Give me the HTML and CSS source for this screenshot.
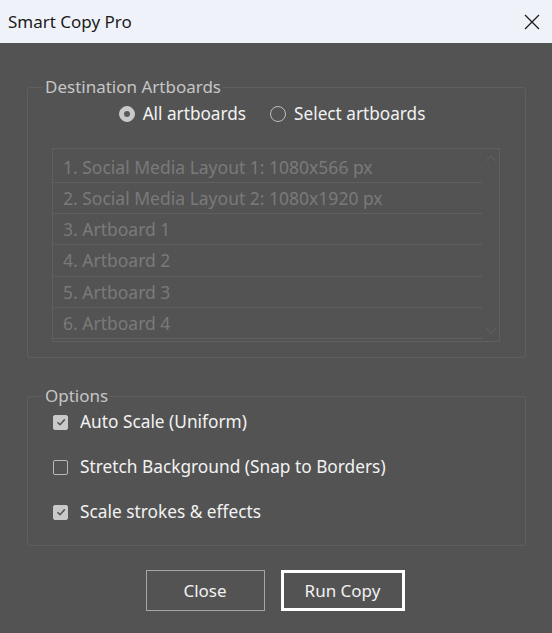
FILE: index.html
```html
<!DOCTYPE html>
<html lang="en">
<head>
    <meta charset="UTF-8">
    <meta name="viewport" content="width=device-width, initial-scale=1.0">
    <title>Smart Copy Pro</title>
    <link rel="stylesheet" href="styles.css">
</head>
<body>
    <div class="titlebar">
        <span class="title">Smart Copy Pro</span>
        <span class="close-x">
            <svg width="16" height="16" viewBox="0 0 16 16">
                <path d="M1 1L15 15M15 1L1 15" stroke="#1b1b1b" stroke-width="1.3" fill="none"/>
            </svg>
        </span>
    </div>

    <div class="dialog">
        <fieldset class="panel">
            <legend>Destination Artboards</legend>
            <div class="radio-row">
                <label class="radio checked"><span class="dot"></span>All artboards</label>
                <label class="radio"><span class="dot"></span>Select artboards</label>
            </div>
            <div class="listbox">
                <ul class="items">
                    <li>1. Social Media Layout 1: 1080x566 px</li>
                    <li>2. Social Media Layout 2: 1080x1920 px</li>
                    <li>3. Artboard 1</li>
                    <li>4. Artboard 2</li>
                    <li>5. Artboard 3</li>
                    <li>6. Artboard 4</li>
                </ul>
                <div class="scroll">
                    <svg width="12" height="8" viewBox="0 0 12 8"><path d="M1 6L6 1L11 6" stroke="#626262" fill="none"/></svg>
                    <svg width="12" height="8" viewBox="0 0 12 8"><path d="M1 2L6 7L11 2" stroke="#626262" fill="none"/></svg>
                </div>
            </div>
        </fieldset>

        <fieldset class="panel options">
            <legend>Options</legend>
            <label class="check checked"><span class="box"><svg width="12" height="12" viewBox="0 0 12 12"><path d="M2.5 6.2L5 8.7L9.8 3.4" stroke="#555" stroke-width="1.6" fill="none"/></svg></span>Auto Scale (Uniform)</label>
            <label class="check"><span class="box"></span>Stretch Background (Snap to Borders)</label>
            <label class="check checked"><span class="box"><svg width="12" height="12" viewBox="0 0 12 12"><path d="M2.5 6.2L5 8.7L9.8 3.4" stroke="#555" stroke-width="1.6" fill="none"/></svg></span>Scale strokes &amp; effects</label>
        </fieldset>

        <div class="buttons">
            <button class="btn">Close</button>
            <button class="btn primary">Run Copy</button>
        </div>
    </div>
</body>
</html>
```

FILE: styles.css
```css
body {
    margin: 0;
    width: 552px;
    height: 633px;
    background: #535353;
    font-family: "Noto Sans", "Open Sans", sans-serif;
    font-size: 17px;
    overflow: hidden;
}
.titlebar {
    height: 43px;
    background: #eff3f9;
    display: flex;
    align-items: center;
    justify-content: space-between;
    padding: 0 12px 0 8px;
}
.title {
    color: #1b1b1b;
    font-size: 17px;
}
.close-x {
    display: flex;
    margin-top: 1px;
}
.dialog {
    padding: 33px 26px 0 27px;
}
.panel {
    margin: 0;
    padding: 0 25px 0 24px;
    border: 1px solid #5f5f5f;
    border-radius: 3px;
}
.panel legend {
    color: #c6c6c6;
    padding: 0 2px;
    margin-left: -9px;
    line-height: 22px;
}
.radio-row {
    display: flex;
    justify-content: center;
    gap: 24px;
    margin-top: 4px;
    margin-left: -8px;
    font-size: 17.2px;
}
.radio {
    display: flex;
    align-items: center;
    gap: 8px;
    color: #f2f2f2;
    line-height: 24px;
}
.dot {
    width: 14px;
    height: 14px;
    border: 1px solid #bdbdbd;
    border-radius: 50%;
    box-sizing: content-box;
}
.radio.checked .dot {
    background: #c9c9c9;
    border-color: #c9c9c9;
    position: relative;
}
.radio.checked .dot::after {
    content: "";
    position: absolute;
    left: 4px;
    top: 4px;
    width: 6px;
    height: 6px;
    border-radius: 50%;
    background: #5a5a5a;
}
.listbox {
    margin: 22px 0 15px;
    height: 194px;
    box-sizing: border-box;
    border: 1px solid #5f5f5f;
    display: flex;
}
.items {
    list-style: none;
    margin: 0;
    padding: 2.5px 0 0;
    flex: 1;
    font-size: 17.5px;
}
.items li {
    height: 30.25px;
    line-height: 30px;
    padding-left: 10px;
    color: #7a7a7a;
    border-bottom: 1px solid #606060;
}
.scroll {
    width: 17px;
    display: flex;
    flex-direction: column;
    justify-content: space-between;
    align-items: center;
    padding: 6px 0 7px;
}
.options {
    margin-top: 27px;
    padding-bottom: 21px;
    display: flex;
    flex-direction: column;
    gap: 21px;
}
.options legend {
    margin-bottom: 3px;
}
.check {
    display: flex;
    align-items: center;
    gap: 12px;
    color: #f2f2f2;
    line-height: 24px;
    margin-left: 1px;
    font-size: 17.3px;
}
.box {
    width: 13px;
    height: 13px;
    border: 1px solid #b8b8b8;
    border-radius: 2px;
    display: flex;
    align-items: center;
    justify-content: center;
}
.check.checked .box {
    background: #c9c9c9;
    border-color: #c9c9c9;
}
.buttons {
    display: flex;
    justify-content: center;
    gap: 16px;
    margin-top: 24px;
    padding-right: 3px;
}
.btn {
    height: 41px;
    width: 119px;
    background: #535353;
    color: #f2f2f2;
    border: 1px solid #a6a6a6;
    font-family: inherit;
    font-size: 17px;
    padding: 0;
}
.btn.primary {
    width: 124px;
    border: 3px solid #ffffff;
}
```
